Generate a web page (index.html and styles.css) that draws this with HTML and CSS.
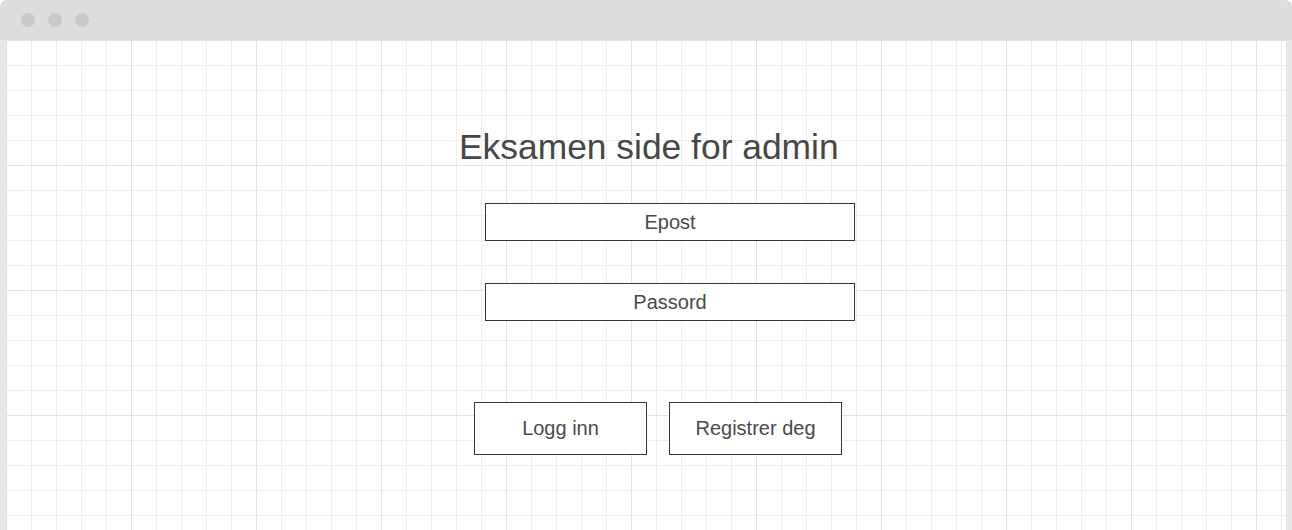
FILE: index.html
```html
<!DOCTYPE html>
<html lang="no">
<head>
<meta charset="utf-8">
<title>Eksamen side for admin</title>
<link rel="stylesheet" href="styles.css">
</head>
<body>
<div class="window">
  <div class="titlebar">
    <span class="dot"></span>
    <span class="dot"></span>
    <span class="dot"></span>
  </div>
  <div class="canvas">
    <div class="form">
      <h1 class="title">Eksamen side for admin</h1>
      <div class="field field-email">Epost</div>
      <div class="field field-password">Passord</div>
      <div class="actions">
        <div class="btn">Logg inn</div>
        <div class="btn">Registrer deg</div>
      </div>
    </div>
  </div>
</div>
</body>
</html>
```
FILE: styles.css
```css
html, body {
  margin: 0;
  padding: 0;
  background: #ffffff;
}

body {
  width: 1292px;
  height: 530px;
  overflow: hidden;
  font-family: "Liberation Sans", Arial, sans-serif;
  color: #474747;
}

.window {
  height: 530px;
  background: #e8e8e8;
  border-radius: 7px 7px 0 0;
  display: flex;
  flex-direction: column;
  overflow: hidden;
}

.titlebar {
  height: 40px;
  flex: none;
  background: #dddddd;
  display: flex;
  align-items: center;
  gap: 13px;
  padding: 0 0 1px 21px;
  box-sizing: border-box;
}

.dot {
  width: 14px;
  height: 14px;
  border-radius: 50%;
  background: #c9c9c9;
}

.canvas {
  flex: 1;
  margin: 0 6px;
  background-color: #ffffff;
  background-image:
    linear-gradient(to right, #e2e2e2 1px, transparent 1px),
    linear-gradient(to bottom, #e2e2e2 1px, transparent 1px),
    linear-gradient(to right, #eeeeee 1px, transparent 1px),
    linear-gradient(to bottom, #eeeeee 1px, transparent 1px);
  background-size: 125px 125px, 125px 125px, 25px 25px, 25px 25px;
  background-position: 0 0;
}

.form {
  display: flex;
  flex-direction: column;
  align-items: flex-start;
  padding-top: 87px;
}

.title {
  margin: 0 0 0 453px;
  font-size: 35.4px;
  line-height: 40px;
  font-weight: normal;
  color: #474747;
}

.field {
  margin-left: 479px;
  width: 370px;
  height: 38px;
  box-sizing: border-box;
  border: 1px solid #363636;
  background: #ffffff;
  text-align: center;
  font-size: 20px;
  line-height: 36px;
  color: #4a4a4a;
}

.field-email {
  margin-top: 36px;
}

.field-password {
  margin-top: 42px;
}

.actions {
  margin: 81px 0 0 468px;
  display: flex;
  gap: 22px;
}

.btn {
  width: 173px;
  height: 53px;
  box-sizing: border-box;
  border: 1px solid #363636;
  background: #ffffff;
  text-align: center;
  font-size: 20px;
  line-height: 51px;
  color: #4a4a4a;
}
```
